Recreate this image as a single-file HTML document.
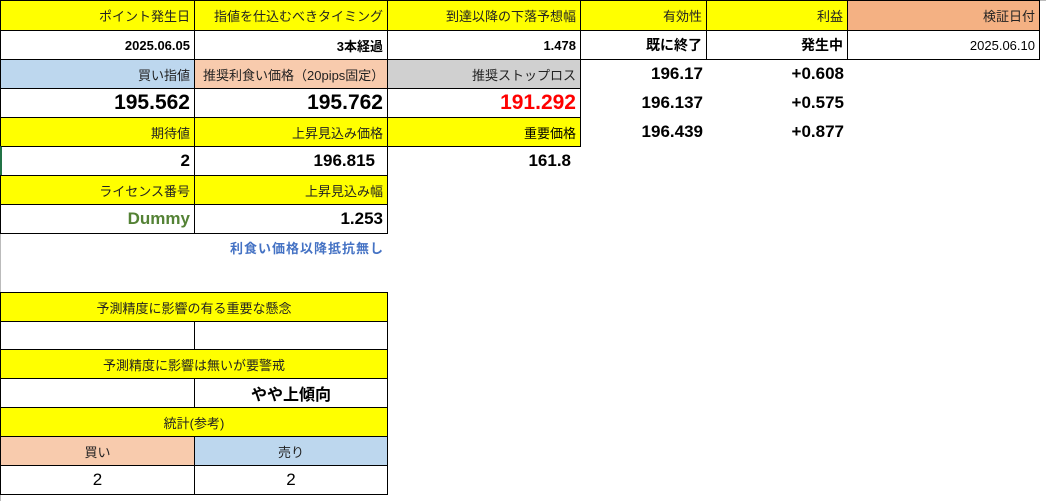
<!DOCTYPE html>
<html><head><meta charset="utf-8"><style>
body{margin:0;width:1046px;height:501px;background:#fff;position:relative;overflow:hidden;font-family:"Liberation Sans","Noto Sans CJK JP",sans-serif;}
.c{position:absolute;box-sizing:border-box;display:flex;align-items:center;justify-content:flex-end;padding-right:4px;white-space:nowrap;font-size:13px;color:#222;}
.b{border:1px solid #000;}
.y{background:#ffff00;}
.n{font-weight:bold;font-size:14px;color:#000;}
.big{font-weight:bold;font-size:21px;color:#000;}
.m{font-weight:bold;font-size:17px;color:#000;}
.ctr{justify-content:center;padding:0;}
</style></head><body>
<div style="position:absolute;left:0;top:0;width:1046px;height:1px;background:#bbb"></div>
<div style="position:absolute;left:0;top:0;width:1px;height:501px;background:#bbb"></div>
<!-- row1 -->
<div class="c b y" style="left:0;top:0;width:195px;height:31px">ポイント発生日</div>
<div class="c b y" style="left:194px;top:0;width:194px;height:31px">指値を仕込むべきタイミング</div>
<div class="c b y" style="left:387px;top:0;width:194px;height:31px">到達以降の下落予想幅</div>
<div class="c b y" style="left:580px;top:0;width:127px;height:31px">有効性</div>
<div class="c b y" style="left:706px;top:0;width:142px;height:31px">利益</div>
<div class="c b" style="left:847px;top:0;width:193px;height:31px;background:#f4b183">検証日付</div>
<!-- row2 -->
<div class="c b n" style="left:0;top:30px;width:195px;height:30px;font-size:13px">2025.06.05</div>
<div class="c b n" style="left:194px;top:30px;width:194px;height:30px;font-size:13px">3本経過</div>
<div class="c b n" style="left:387px;top:30px;width:194px;height:30px;font-size:13px">1.478</div>
<div class="c b n" style="left:580px;top:30px;width:127px;height:30px">既に終了</div>
<div class="c b n" style="left:706px;top:30px;width:142px;height:30px">発生中</div>
<div class="c b" style="left:847px;top:30px;width:193px;height:30px;color:#000">2025.06.10</div>
<!-- row3 -->
<div class="c b" style="left:0;top:59px;width:195px;height:30px;background:#bdd7ee">買い指値</div>
<div class="c b" style="left:194px;top:59px;width:194px;height:30px;background:#f8cbad;justify-content:flex-start;padding-left:8px">推奨利食い価格（20pips固定）</div>
<div class="c b" style="left:387px;top:59px;width:194px;height:30px;background:#d0d0d0">推奨ストップロス</div>
<div class="c m" style="left:580px;top:59px;width:127px;height:30px">196.17</div>
<div class="c m" style="left:706px;top:59px;width:142px;height:30px">+0.608</div>
<!-- row4 -->
<div class="c b big" style="left:0;top:88px;width:195px;height:30px">195.562</div>
<div class="c b big" style="left:194px;top:88px;width:194px;height:30px">195.762</div>
<div class="c b big" style="left:387px;top:88px;width:194px;height:30px;color:#ff0000">191.292</div>
<div class="c m" style="left:580px;top:88px;width:127px;height:30px">196.137</div>
<div class="c m" style="left:706px;top:88px;width:142px;height:30px">+0.575</div>
<!-- row5 -->
<div class="c b y" style="left:0;top:117px;width:195px;height:30px">期待値</div>
<div class="c b y" style="left:194px;top:117px;width:194px;height:30px">上昇見込み価格</div>
<div class="c b y" style="left:387px;top:117px;width:194px;height:30px;color:#000">重要価格</div>
<div class="c m" style="left:580px;top:117px;width:127px;height:30px">196.439</div>
<div class="c m" style="left:706px;top:117px;width:142px;height:30px">+0.877</div>
<!-- row6 -->
<div class="c b m" style="left:0;top:146px;width:195px;height:30px;border-left:2px solid #217346">2</div>
<div class="c b m" style="left:194px;top:146px;width:194px;height:30px;padding-right:12px">196.815</div>
<div class="c m" style="left:387px;top:146px;width:194px;height:30px;padding-right:10px">161.8</div>
<!-- row7 -->
<div class="c b y" style="left:0;top:175px;width:195px;height:30px">ライセンス番号</div>
<div class="c b y" style="left:194px;top:175px;width:194px;height:30px">上昇見込み幅</div>
<!-- row8 -->
<div class="c b m" style="left:0;top:204px;width:195px;height:30px;color:#548235">Dummy</div>
<div class="c b m" style="left:194px;top:204px;width:194px;height:30px">1.253</div>
<div class="c" style="left:194px;top:233px;width:194px;height:28px;color:#4472c4;font-weight:bold;font-size:13px;letter-spacing:1px">利食い価格以降抵抗無し</div>
<!-- bottom table -->
<div class="c b y ctr" style="left:0;top:292px;width:388px;height:30px">予測精度に影響の有る重要な懸念</div>
<div class="c b" style="left:0;top:321px;width:195px;height:29px"></div>
<div class="c b" style="left:194px;top:321px;width:194px;height:29px"></div>
<div class="c b y ctr" style="left:0;top:349px;width:388px;height:30px">予測精度に影響は無いが要警戒</div>
<div class="c b" style="left:0;top:378px;width:195px;height:30px"></div>
<div class="c b ctr" style="left:194px;top:378px;width:194px;height:30px;font-size:16px;font-weight:bold;color:#000">やや上傾向</div>
<div class="c b y ctr" style="left:0;top:407px;width:388px;height:30px">統計(参考)</div>
<div class="c b ctr" style="left:0;top:436px;width:195px;height:30px;background:#f8cbad">買い</div>
<div class="c b ctr" style="left:194px;top:436px;width:194px;height:30px;background:#bdd7ee">売り</div>
<div class="c b ctr" style="left:0;top:465px;width:195px;height:30px;font-size:17px;color:#000">2</div>
<div class="c b ctr" style="left:194px;top:465px;width:194px;height:30px;font-size:17px;color:#000">2</div>
</body></html>
